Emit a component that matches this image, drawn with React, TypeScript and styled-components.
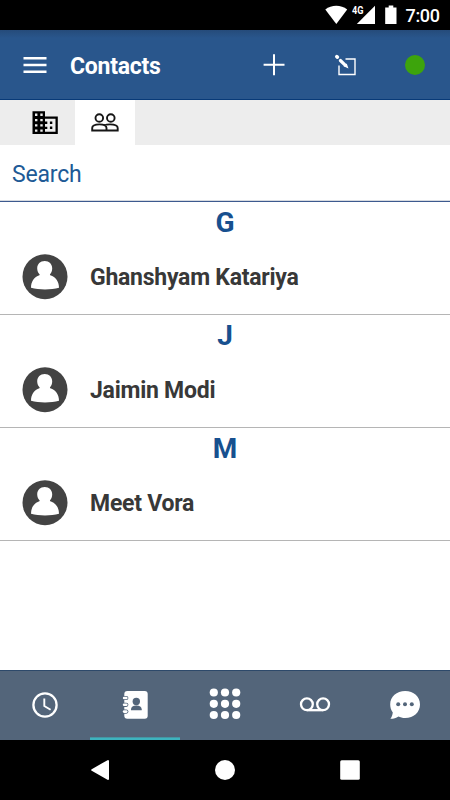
import React from "react";
import styled, { createGlobalStyle } from "styled-components";

const GlobalStyle = createGlobalStyle`
  * { box-sizing: border-box; }
  body { margin: 0; background: #fff; font-family: Roboto, sans-serif; }
  svg { display: block; flex: none; }
  button { border: 0; padding: 0; background: none; font: inherit; color: inherit; }
`;

const Screen = styled.div`
  width: 450px;
  height: 800px;
  display: flex;
  flex-direction: column;
  background: #fff;
  overflow: hidden;
`;

const StatusBar = styled.div`
  height: 30px;
  flex: none;
  display: flex;
  align-items: center;
  justify-content: flex-end;
  background: #000;
  color: #fff;
`;

const Clock = styled.time`
  width: 50px;
  padding: 1px 0 0 5.5px;
  font-size: 18px;
  font-weight: 500;
  line-height: 30px;
  letter-spacing: -0.35px;
  white-space: nowrap;
`;

const Header = styled.header`
  height: 70px;
  flex: none;
  display: flex;
  align-items: center;
  background: linear-gradient(#254b7a, #29568c 8px, #29568c);
  border-bottom: 1px solid #083a78;
  color: #fff;
`;

const HeaderButton = styled.button`
  width: 70px;
  height: 69px;
`;

const Title = styled.h1`
  flex: 1;
  margin: 0;
  padding-top: 4px;
  font-size: 23px;
  line-height: 31px;
  font-weight: 700;
  letter-spacing: -0.25px;
`;

const Tabs = styled.div`
  height: 45px;
  flex: none;
  display: flex;
  padding-left: 15px;
  background: #ededed;
`;

const Tab = styled.button<{ $active?: boolean }>`
  width: 60px;
  height: 45px;
  background: ${(p) => (p.$active ? "#fff" : "transparent")};
`;

const SearchBar = styled.div`
  height: 57px;
  flex: none;
  padding: 14px 12px 0;
  border-bottom: 1px solid #3d5a8f;
  box-shadow: inset 0 -1px #d6dae0;
  color: #205a96;
  font-size: 23px;
  line-height: 31px;
  letter-spacing: -0.2px;
`;

const List = styled.main`
  flex: 1;
  min-height: 0;
`;

const Section = styled.section`
  height: 113px;
  border-bottom: 1px solid #b5b5b5;
`;

const Letter = styled.h2`
  margin: 0;
  height: 37px;
  text-align: center;
  color: #17508f;
  font-size: 28px;
  font-weight: 700;
  line-height: 41px;
`;

const ContactRow = styled.div`
  height: 75px;
  display: flex;
  align-items: center;
  padding-left: 22px;
`;

const Name = styled.span`
  margin-left: 22px;
  padding-top: 2px;
  color: #383838;
  font-size: 23px;
  font-weight: 700;
  line-height: 31px;
  letter-spacing: -0.25px;
`;

const BottomNav = styled.nav`
  height: 70px;
  flex: none;
  display: grid;
  grid-template-columns: repeat(5, 90px);
  background: #53657a;
  box-shadow: inset 0 1px #2d496a;
`;

const NavItem = styled.button<{ $active?: boolean }>`
  height: 70px;
  box-shadow: ${(p) => (p.$active ? "inset 0 -2px #3db4bf, inset 0 -3px #4596a3" : "none")};
`;

const SystemBar = styled.div`
  height: 60px;
  flex: none;
  background: #000;
  display: grid;
  grid-template-columns: 125px 125px 125px;
  padding-left: 37px;
`;

const Avatar = () => (
  <svg width="46" height="46" viewBox="0 0 46 46">
    <circle cx="23" cy="22.7" r="22.5" fill="#434343" />
    <path
      fill="#fff"
      d="M22.7 7.1C27.2 7.1 30.2 10.2 30.2 14.5C30.2 17 29.2 19.3 27.9 20.4C28 21 28.3 21.2 29 21.4C33.8 23 37 27.5 37 33.8C29 36.1 17 36.1 9 33.8C9 27.5 12 23 16.8 21.4C17.3 21.2 17.6 21 17.7 20.4C16.3 19.3 15.2 17 15.2 14.5C15.2 10.2 18.2 7.1 22.7 7.1Z"
    />
  </svg>
);

const groups = [
  { letter: "G", name: "Ghanshyam Katariya" },
  { letter: "J", name: "Jaimin Modi" },
  { letter: "M", name: "Meet Vora" },
];

export default function App() {
  return (
    <>
      <GlobalStyle />
      <Screen>
        <StatusBar>
          <svg width="80" height="30" viewBox="320 0 80 30" fill="#fff">
            <path d="M325.3 9.5C331.5 4.6 341 4.6 347.2 9.5L336.3 24z" />
            <path d="M375 5.8V24h-18.2z" />
            <path d="M388.7 5.6h4.6v1.8h3.2V24h-11.3V7.4h3.5z" />
            <text x="352" y="14" fontSize="10" fontWeight="700" textLength="11.5" lengthAdjust="spacingAndGlyphs">4G</text>
          </svg>
          <Clock>7:00</Clock>
        </StatusBar>

        <Header>
          <HeaderButton aria-label="Menu">
            <svg width="70" height="69" viewBox="0 30 70 69" fill="#fff">
              <path d="M23.5 57h23v2.5h-23zM23.5 63.8h23v2.5h-23zM23.5 70.5h23V73h-23z" />
            </svg>
          </HeaderButton>
          <Title>Contacts</Title>
          <HeaderButton aria-label="Add">
            <svg width="70" height="69" viewBox="240 30 70 69" stroke="#fff" strokeWidth="2">
              <path d="M274 54.3v20.9M263.6 64.8h20.9" />
            </svg>
          </HeaderButton>
          <HeaderButton aria-label="Edit">
            <svg width="70" height="69" viewBox="310 30 70 69" fill="none" stroke="#fff">
              <path strokeWidth="1.4" d="M345.5 59h9.5v15.5h-16V65.5" />
              <path strokeWidth="3.6" strokeLinecap="round" d="M336.8 56.6l.6.5" />
              <path strokeWidth="3.2" strokeLinecap="round" d="M340.4 60.5l4.5 4.3" />
              <path fill="#fff" stroke="none" d="M343.5 66.2l5 2.2-1.8-5z" />
            </svg>
          </HeaderButton>
          <HeaderButton aria-label="Available">
            <svg width="70" height="69" viewBox="380 30 70 69">
              <circle cx="415" cy="65" r="10" fill="#3da40c" />
            </svg>
          </HeaderButton>
        </Header>

        <Tabs>
          <Tab aria-label="Company">
            <svg width="60" height="45" viewBox="15 100 60 45">
              <path
                fillRule="evenodd"
                d="M32.5 111.3H45v5.3h12.8v17.5H32.5zM35 113.6v2.4h2.4v-2.4zM40.3 113.6v2.4h2.4v-2.4zM35 118.9v2.4h2.4v-2.4zM40.3 118.9v2.4h2.4v-2.4zM35 124.2v2.4h2.4v-2.4zM40.3 124.2v2.4h2.4v-2.4zM35 129.4v2.4h2.4v-2.4zM40.3 129.4v2.4h2.4v-2.4zM45 118.8v2.8h2.3v2.4H45v2.7h2.3v2.4H45v2.7h10.5v-13z"
              />
              <path d="M49.9 121.5h2.4v2.5h-2.4zM49.9 126.6h2.4v2.5h-2.4z" />
            </svg>
          </Tab>
          <Tab $active aria-label="People">
            <svg width="60" height="45" viewBox="75 100 60 45" fill="none" stroke="#161616" strokeWidth="1.9">
              <circle cx="99.3" cy="118" r="3.8" />
              <circle cx="110.8" cy="118" r="3.8" />
              <path d="M92.2 130.5v-2.4c0-2.3 3-3.7 7.3-3.7s7 1.4 7 3.7v2.4zM104 125.5c1.6-.7 3.7-1.1 6-1.1 4.3 0 7.7 1.4 7.7 3.7v2.4h-11.2" />
            </svg>
          </Tab>
        </Tabs>

        <SearchBar>Search</SearchBar>

        <List>
          {groups.map((group) => (
            <Section key={group.letter}>
              <Letter>{group.letter}</Letter>
              <ContactRow>
                <Avatar />
                <Name>{group.name}</Name>
              </ContactRow>
            </Section>
          ))}
        </List>

        <BottomNav>
          <NavItem aria-label="Recent">
            <svg width="90" height="70" viewBox="0 670 90 70" fill="none" stroke="#fff">
              <circle cx="45" cy="705" r="11.6" strokeWidth="2.3" />
              <path strokeWidth="1.9" d="M44.3 698.5v7.5l6.3 3.8" />
            </svg>
          </NavItem>
          <NavItem $active aria-label="Contacts">
            <svg width="90" height="70" viewBox="90 670 90 70" fill="#fff">
              <rect x="124.3" y="691" width="23.4" height="27.7" rx="3" />
              {[698, 704.8, 711.6].map((y) => (
                <g key={y}>
                  <rect x="122.2" y={y - 2.1} width="6.2" height="4.2" rx="2.1" fill="#53657a" />
                  <rect x="122.8" y={y - 1.3} width="4.8" height="2.6" rx="1.3" />
                </g>
              ))}
              <g fill="#53657a">
                <circle cx="136.3" cy="701.5" r="3.7" />
                <path d="M131 710.3v-1c0-2.3 2-3.7 5.3-3.7s5.4 1.4 5.4 3.7v1z" />
              </g>
            </svg>
          </NavItem>
          <NavItem aria-label="Keypad">
            <svg width="90" height="70" viewBox="180 670 90 70" fill="#fff">
              {[692.5, 703.8, 715].map((y) =>
                [213.8, 225, 236.2].map((x) => <circle key={`${x}-${y}`} cx={x} cy={y} r="4.1" />)
              )}
            </svg>
          </NavItem>
          <NavItem aria-label="Voicemail">
            <svg width="90" height="70" viewBox="270 670 90 70" fill="none" stroke="#fff" strokeWidth="2.3">
              <circle cx="306.9" cy="704.3" r="5.9" />
              <circle cx="323.1" cy="704.3" r="5.9" />
              <path d="M306.9 710.2h16.2" />
            </svg>
          </NavItem>
          <NavItem aria-label="Messages">
            <svg width="90" height="70" viewBox="360 670 90 70" fill="#fff">
              <path d="M405.2 691c8.5 0 14.8 5.7 14.8 13.4s-6.3 13.5-14.8 13.5c-2.8 0-5-.6-6.8-1.5-2.2 1.4-4.6 2.3-8 2.4 1.3-1.8 2.1-3.8 2.4-6.3-1.6-2.2-2.6-4.9-2.6-8.1 0-7.7 6.5-13.4 15-13.4z" />
              <g fill="#53657a">
                <circle cx="398.2" cy="704.3" r="2" />
                <circle cx="405" cy="704.3" r="2" />
                <circle cx="411.8" cy="704.3" r="2" />
              </g>
            </svg>
          </NavItem>
        </BottomNav>

        <SystemBar>
          <button aria-label="Back">
            <svg width="125" height="60" viewBox="37 740 125 60" fill="#fff" stroke="#fff" strokeWidth="2" strokeLinejoin="round">
              <path d="M92.2 770L108 761v18z" />
            </svg>
          </button>
          <button aria-label="Home">
            <svg width="125" height="60" viewBox="162 740 125 60">
              <circle cx="225" cy="770" r="10" fill="#fff" />
            </svg>
          </button>
          <button aria-label="Overview">
            <svg width="125" height="60" viewBox="287 740 125 60">
              <rect x="340.2" y="760.2" width="19.6" height="19.6" rx="1.5" fill="#fff" />
            </svg>
          </button>
        </SystemBar>
      </Screen>
    </>
  );
}
